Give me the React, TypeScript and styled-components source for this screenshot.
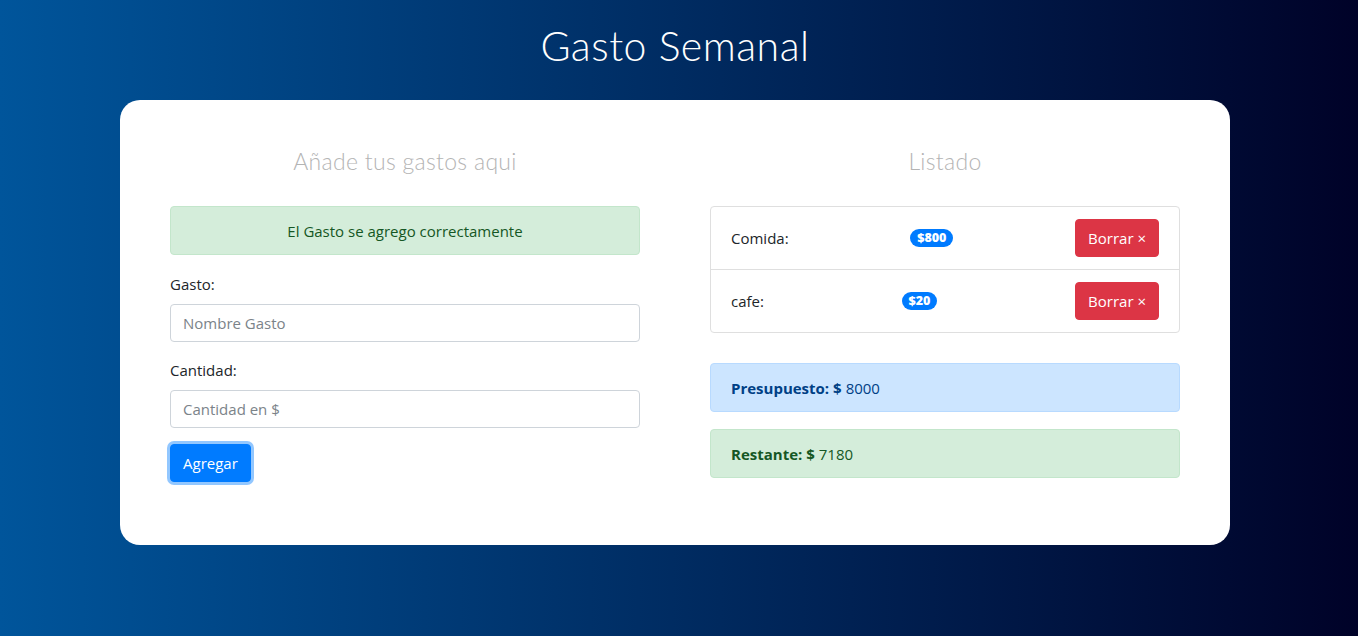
import styled, { createGlobalStyle } from "styled-components";

const GlobalStyle = createGlobalStyle`
  *, *::before, *::after {
    box-sizing: border-box;
  }
  body {
    margin: 0;
    min-height: 100vh;
    background: linear-gradient(to right, #00559b 0%, #000228 100%);
    font-family: "Open Sans", "Noto Sans", sans-serif;
    font-size: 15px;
    color: #212529;
  }
`;

const Page = {
  Main: styled.div`
    width: 100%;
    min-height: 636px;
    display: flex;
    flex-direction: column;
    align-items: center;
    padding: 21px 8px 0 0;
  `,
  Title: styled.h1`
    margin: 0;
    height: 79px;
    font-family: "Lato", "Open Sans", sans-serif;
    font-weight: 300;
    font-size: 41px;
    letter-spacing: 0.5px;
    color: #ffffff;
  `,
  Card: styled.div`
    width: 1110px;
    height: 445px;
    background: #ffffff;
    border-radius: 20px;
    padding: 44px 50px 0 50px;
    display: grid;
    grid-template-columns: 470px 470px;
    column-gap: 70px;
    align-items: start;
  `,
};

const Column = styled.div`
  display: flex;
  flex-direction: column;
`;

const Heading = styled.h2`
  margin: 0 0 27px 0;
  height: 35px;
  text-align: center;
  font-family: "Lato", "Open Sans", sans-serif;
  font-weight: 300;
  font-size: 23px;
  letter-spacing: 0.3px;
  line-height: 35px;
  color: #b4b4b4;
`;

const Alert = styled.div<{ $tone: "success" | "primary"; $center?: boolean }>`
  height: 49px;
  padding: 0 20px;
  display: flex;
  align-items: center;
  justify-content: ${(p) => (p.$center ? "center" : "flex-start")};
  border-radius: 4px;
  border: 1px solid ${(p) => (p.$tone === "success" ? "#c3e6cb" : "#b8daff")};
  background: ${(p) => (p.$tone === "success" ? "#d4edda" : "#cce5ff")};
  color: ${(p) => (p.$tone === "success" ? "#155724" : "#004085")};
  margin-bottom: 17px;

  > strong {
    font-weight: 700;
    margin-right: 4px;
  }
`;

const Field = {
  Group: styled.div`
    display: flex;
    flex-direction: column;
    margin-bottom: 16px;
  `,
  Label: styled.label`
    height: 24px;
    line-height: 24px;
    margin-bottom: 8px;
    color: #212529;
  `,
  Input: styled.input`
    height: 38px;
    width: 100%;
    padding: 6px 12px;
    border: 1px solid #ced4da;
    border-radius: 4px;
    font-family: inherit;
    font-size: 15px;
    color: #495057;
    outline: none;

    &::placeholder {
      color: #7b8389;
    }
  `,
};

const Button = styled.button<{ $variant: "primary" | "danger" }>`
  height: 38px;
  padding: 0 12px;
  border: 1px solid ${(p) => (p.$variant === "primary" ? "#007bff" : "#dc3545")};
  border-radius: 4px;
  background: ${(p) => (p.$variant === "primary" ? "#007bff" : "#dc3545")};
  color: #ffffff;
  font-family: inherit;
  font-size: 15px;
  cursor: pointer;
  box-shadow: ${(p) =>
    p.$variant === "primary" ? "0 0 0 3px rgba(38, 143, 255, 0.5)" : "none"};
`;

const SubmitRow = styled.div`
  display: flex;
`;

const List = {
  Group: styled.ul`
    list-style: none;
    margin: 0 0 30px 0;
    padding: 0;
    border: 1px solid #dfdfdf;
    border-radius: 4px;
  `,
  Item: styled.li`
    height: 62px;
    padding: 0 20px;
    display: flex;
    align-items: center;
    justify-content: space-between;

    & + & {
      border-top: 1px solid #dfdfdf;
      height: 63px;
    }
  `,
  Name: styled.span`
    color: #212529;
  `,
  Badge: styled.span`
    display: inline-block;
    padding: 2px 7px;
    border-radius: 10px;
    background: #007bff;
    color: #ffffff;
    font-size: 12.5px;
    font-weight: 800;
    line-height: 14px;
  `,
};

const gastos = [
  { id: 1, nombre: "Comida", cantidad: 800 },
  { id: 2, nombre: "cafe", cantidad: 20 },
];

const App = () => {
  return (
    <>
      <GlobalStyle />
      <Page.Main>
        <Page.Title>Gasto Semanal</Page.Title>
        <Page.Card>
          <Column>
            <Heading>Añade tus gastos aqui</Heading>
            <Alert $tone="success" $center>
              El Gasto se agrego correctamente
            </Alert>
            <Field.Group>
              <Field.Label>Gasto:</Field.Label>
              <Field.Input type="text" placeholder="Nombre Gasto" />
            </Field.Group>
            <Field.Group>
              <Field.Label>Cantidad:</Field.Label>
              <Field.Input type="number" placeholder="Cantidad en $" />
            </Field.Group>
            <SubmitRow>
              <Button $variant="primary" type="button">
                Agregar
              </Button>
            </SubmitRow>
          </Column>
          <Column>
            <Heading>Listado</Heading>
            <List.Group>
              {gastos.map((gasto) => (
                <List.Item key={gasto.id}>
                  <List.Name>{gasto.nombre}:</List.Name>
                  <List.Badge>${gasto.cantidad}</List.Badge>
                  <Button $variant="danger" type="button">
                    Borrar ×
                  </Button>
                </List.Item>
              ))}
            </List.Group>
            <Alert $tone="primary">
              <strong>Presupuesto: $</strong> 8000
            </Alert>
            <Alert $tone="success">
              <strong>Restante: $</strong> 7180
            </Alert>
          </Column>
        </Page.Card>
      </Page.Main>
    </>
  );
};

export default App;
